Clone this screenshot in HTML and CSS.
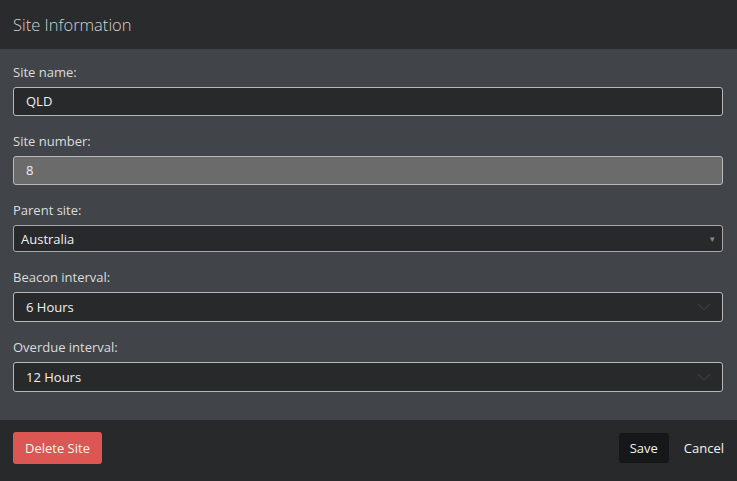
FILE: index.html
```html
<!DOCTYPE html>
<html lang="en">
<head>
  <meta charset="UTF-8" />
  <meta name="viewport" content="width=device-width, initial-scale=1.0" />
  <title>Site Information</title>
  <link rel="stylesheet" href="styles.css">
</head>
<body>
  <div class="modal">
    <div class="modal-header">Site Information</div>
    <div class="modal-body">
      <label class="field-label">Site name:</label>
      <div class="field">QLD</div>

      <label class="field-label">Site number:</label>
      <div class="field disabled">8</div>

      <label class="field-label">Parent site:</label>
      <div class="field select-plain">
        <span>Australia</span>
        <span class="caret">&#9662;</span>
      </div>

      <label class="field-label">Beacon interval:</label>
      <div class="field select">
        <span>6 Hours</span>
        <svg class="chevron" width="14" height="8" viewBox="0 0 14 8"><path d="M1 1 L7 7 L13 1" fill="none" stroke="#3c3d40" stroke-width="1.2"/></svg>
      </div>

      <label class="field-label">Overdue interval:</label>
      <div class="field select">
        <span>12 Hours</span>
        <svg class="chevron" width="14" height="8" viewBox="0 0 14 8"><path d="M1 1 L7 7 L13 1" fill="none" stroke="#3c3d40" stroke-width="1.2"/></svg>
      </div>
    </div>
    <div class="modal-footer">
      <button class="btn btn-danger">Delete Site</button>
      <div class="spacer"></div>
      <button class="btn btn-dark">Save</button>
      <button class="btn btn-link">Cancel</button>
    </div>
  </div>
</body>
</html>
```

FILE: styles.css
```css
html, body {
  margin: 0;
  padding: 0;
  height: 100%;
}
body {
  font-family: 'Open Sans', 'Noto Sans', sans-serif;
  background-color: #28292b;
  color: #e6e6e6;
}
.modal {
  display: flex;
  flex-direction: column;
  height: 481px;
}
.modal-header {
  background-color: #2a2b2d;
  height: 49px;
  padding: 0 13px;
  font-size: 16.5px;
  font-weight: 300;
  line-height: 49px;
  color: #d2d2d2;
  box-sizing: border-box;
}
.modal-body {
  background-color: #41454a;
  padding: 13px 14px 13px 13px;
  display: flex;
  flex-direction: column;
  height: 371px;
  box-sizing: border-box;
}
.field-label {
  font-size: 13px;
  line-height: 20px;
  color: #dcdcdc;
  margin-bottom: 5px;
}
.field {
  height: 30px;
  box-sizing: border-box;
  border: 1px solid #b8b8b8;
  border-radius: 3px;
  background-color: #28292b;
  color: #f0f0f0;
  font-size: 13px;
  padding: 0 12px;
  display: flex;
  align-items: center;
  margin-bottom: 15px;
}
.field.disabled {
  background-color: #6b6b6b;
}
.field.select-plain {
  padding: 0 7px;
  height: 29px;
  border-color: #a8a8a8;
  justify-content: space-between;
}
.caret {
  color: #8a8a8a;
  font-size: 9px;
}
.field.select {
  height: 31px;
  justify-content: space-between;
}
.chevron {
  margin-right: -1px;
}
.modal-footer {
  flex: 1;
  background-color: #28292b;
  display: flex;
  align-items: center;
  padding: 0 13px 6px;
}
.spacer {
  flex: 1;
}
.btn {
  font-family: 'Open Sans', 'Noto Sans', sans-serif;
  font-size: 13px;
  border: none;
  border-radius: 3px;
  cursor: pointer;
  color: #f4f4f4;
}
.btn-danger {
  background-color: #dc5753;
  height: 32px;
  padding: 0 12px;
}
.btn-dark {
  background-color: #161718;
  height: 30px;
  padding: 0 11px;
}
.btn-link {
  background: none;
  padding: 0 0 0 15px;
  height: 30px;
}
```
